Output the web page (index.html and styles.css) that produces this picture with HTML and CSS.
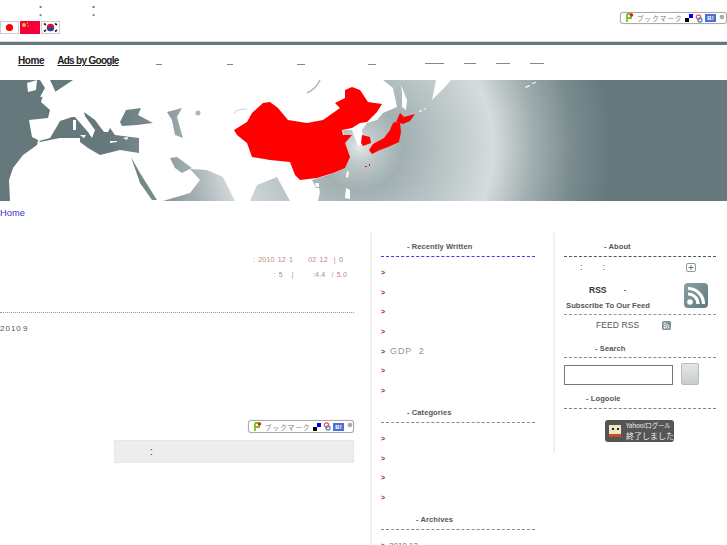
FILE: index.html
```html
<!DOCTYPE html>
<html lang="ja">
<head>
<meta charset="utf-8">
<title>Home</title>
<link rel="stylesheet" href="styles.css">
</head>
<body>
<header class="top">
  <div class="top-left">
    <div class="colons"><span>:</span><span>:</span></div>
    <div class="flags">
      <svg class="flag" viewBox="0 0 19 13"><rect x=".5" y=".5" width="18" height="12" fill="#fff" stroke="#ccc"/><circle cx="9.5" cy="6.5" r="3.6" fill="#f00"/></svg>
      <svg class="flag cn" viewBox="0 0 20 13"><rect width="20" height="13" fill="#f5003a"/><circle cx="4" cy="4" r="2" fill="#f2c230"/><circle cx="7.5" cy="2" r=".7" fill="#f2c230"/><circle cx="8" cy="5" r=".7" fill="#f2c230"/></svg>
      <svg class="flag" viewBox="0 0 19 13"><rect x=".5" y=".5" width="18" height="12" fill="#fff" stroke="#ccc"/><circle cx="9.5" cy="6.5" r="3.7" fill="#d8102f"/><path d="M5.8 6.5a3.7 3.7 0 0 0 7.400 0c-1.500 1-2.500-1-3.700 0s-2.200 1-3.700 0z" fill="#1a4a9c"/><path d="M3 2.500l2 1.500M14 2.500l2 1.500M3 10.500l2-1.500M14 10.500l2-1.500" stroke="#222" stroke-width="1.600"/></svg>
    </div>
  </div>
  <div class="bm bm-top">
    <svg class="bm-p" viewBox="0 0 9 10"><path d="M2 1v8M2 1h4v4H2" fill="none" stroke="#7cc11c" stroke-width="1.800"/><circle cx="6.500" cy="2" r="1.800" fill="#e8232a"/></svg>
    <span class="bm-text">ブックマーク</span>
    <svg class="bm-d" viewBox="0 0 8 8"><rect y="4" width="4" height="4" fill="#000"/><rect x="4" width="4" height="4" fill="#00f"/></svg>
    <svg class="bm-o" viewBox="0 0 8 9"><circle cx="3.500" cy="3" r="2.200" fill="none" stroke="#e55" stroke-width="1.300"/><circle cx="5" cy="6" r="2" fill="none" stroke="#58b" stroke-width="1.300"/></svg>
    <span class="bm-b">B!</span>
    <svg class="bm-g" viewBox="0 0 6 6"><circle cx="3" cy="3" r="2.300" fill="#aaa"/></svg>
  </div>
</header>
<div class="rule"></div>
<nav class="nav">
  <a class="nav-link first">Home</a>
  <a class="nav-link second">Ads by Google</a>
  <span class="dash d1"></span><span class="dash d2"></span><span class="dash d3"></span><span class="dash d4"></span>
  <span class="dash d5"></span><span class="dash d6"></span><span class="dash d7"></span><span class="dash d8"></span>
</nav>
<div class="banner">
  <svg viewBox="0 0 727 121" width="727" height="121">
    <defs>
      <radialGradient id="g" gradientUnits="userSpaceOnUse" cx="360" cy="67" r="252">
        <stop offset="0" stop-color="#e4e8e8"/>
        <stop offset=".07" stop-color="#bcc7c8"/>
        <stop offset=".17" stop-color="#a2b0b2"/>
        <stop offset=".36" stop-color="#bcc7c8"/>
        <stop offset=".53" stop-color="#d6dcdd"/>
        <stop offset=".68" stop-color="#a3b0b2"/>
        <stop offset=".85" stop-color="#788a8d"/>
        <stop offset="1" stop-color="#65797c"/>
      </radialGradient>
    </defs>
    <rect width="727" height="121" fill="url(#g)"/>
    <g fill="#fff">
      <path d="M73 0H383L393 8L397 27L383 33L377 40L367 43L362 50L364 64L358 66L352 50L343 50L345 62L345 80L340 90L328 95L312 100L318 104L320 112L318 121H290L277 97L257 105L250 121H235L223 97L207 90L190 89L200 100L190 113L163 121H10L9 100L13 88L23 75L37 65L38 60L32 57L29 40L48 38L50 30L41 22L43 15L55 12z"/>
      <path d="M40 0H50L57 15L40 17L45 8z"/>
      <path d="M27 3L37 0L36 10L28 12z"/>
      <path d="M436 0H451L444 8L437 15L432 20z"/>
      <path d="M401 5L407 20L406 30L402 27L402 13z"/>
      <path d="M525 7L529 5L530 6L526 8zM532 3L536 2L536 3L532 4z"/>
      <path d="M419 31L421 30L422 31L420 32zM424 29L426 28L426 29L424 30z"/>
      <path d="M347 91L349 92L348 98L346 97z"/>
      <path d="M346 108L350 110L350 119L345 118z"/>
    </g>
    <g fill="url(#g)">
      <path d="M39 61L50 58L56 48L60 41L72 37L75 37L88 52L92 58L95 50L85 36L84 32L95 40L104 52L108 52L110 48L115 55L139 58L139 73L120 70L100 75L88 68L80 62L80 58L60 58L40 62z"/>
      <path d="M120 42L126 30L141 28L138 35L153 43L137 45L122 46z"/>
      <path d="M167 32L182 28L177 37L183 58L175 55L172 40z"/>
      <path d="M131 77L140 93L157 120L152 120L140 103z"/>
      <path d="M170 78L177 77L192 88L182 93L175 88z"/>
      <circle cx="198" cy="33" r="2.500"/>
      <path d="M312 100L320 100L322 108L316 108z"/>
    </g>
    <g fill="#fff">
      <path d="M73 40L76 40L76 50L73 50z"/>
      <path d="M80 55L86 55L84 58z"/>
      <path d="M110 61L117 61L117 62L110 63z"/>
      <path d="M123 58L128 57L127 60z"/>
      <path d="M315 103L319 103L319 107L316 107z"/>
    </g>
    <path d="M320 0Q316 9 307 13" fill="none" stroke="#aab6b8" stroke-width="1.500"/>
    <path d="M234 33Q238 29 247 29" fill="none" stroke="#ccd4d5" stroke-width="1"/>
    <g fill="#f00">
      <path d="M234 50L247 42L252 33L263 23L270 22L278 28L288 40L307 43L323 40L340 28L335 23L345 18L345 10L352 7L360 10L368 22L382 24L377 32L367 42L360 43L352 48L342 50L343 55L352 55L345 63L350 77L345 88L333 93L317 98L300 100L295 95L290 82L270 80L252 77L247 63L237 55z"/>
      <path d="M362 55L370 57L371 63L363 66L361 63z"/>
      <path d="M400 33L404 37L415 34L410 41L403 44L396 42z"/>
      <path d="M394 42L400 43L401 52L399 62L388 67L380 70L372 74L369 70L373 64L384 58L390 50L392 45z"/>
      <rect x="365" y="86" width="2" height="1"/><rect x="369" y="84" width="1" height="2"/>
    </g>
  </svg>
</div>
<a class="crumb">Home</a>
<div class="columns">
  <main class="main">
    <div class="meta">
      <p>: 2010 12 1<span class="gap-a"></span>02 12<span class="gap-b"></span>| <span class="meta-zero">0</span></p>
      <p class="meta-two">: 5<span class="gap-c"></span>|<span class="gap-d"></span>:4.4<span class="gap-e"></span>/ 5.0</p>
    </div>
    <div class="entry">2010 9</div>
    <div class="bm bm-main">
      <svg class="bm-p" viewBox="0 0 9 10"><path d="M2 1v8M2 1h4v4H2" fill="none" stroke="#7cc11c" stroke-width="1.800"/><circle cx="6.500" cy="2" r="1.800" fill="#e8232a"/></svg>
      <span class="bm-text">ブックマーク</span>
      <svg class="bm-d" viewBox="0 0 8 8"><rect y="4" width="4" height="4" fill="#000"/><rect x="4" width="4" height="4" fill="#00f"/></svg>
      <svg class="bm-o" viewBox="0 0 8 9"><circle cx="3.500" cy="3" r="2.200" fill="none" stroke="#e55" stroke-width="1.300"/><circle cx="5" cy="6" r="2" fill="none" stroke="#58b" stroke-width="1.300"/></svg>
      <span class="bm-b">B!</span>
      <svg class="bm-g" viewBox="0 0 6 6"><circle cx="3" cy="3" r="2.300" fill="#aaa"/></svg>
    </div>
    <div class="note">:</div>
  </main>
  <aside class="side-a">
    <h3 class="title t-recent">- Recently Written</h3>
    <ul class="list">
      <li></li><li></li><li></li><li></li><li>GDP &nbsp;2</li><li></li><li></li>
    </ul>
    <h3 class="title t-cat">- Categories</h3>
    <ul class="list">
      <li></li><li></li><li></li><li></li>
    </ul>
    <h3 class="title t-arch">- Archives</h3>
    <ul class="list arch"><li>2010 12</li></ul>
  </aside>
  <aside class="side-b">
    <h3 class="title t-about">- About</h3>
    <div class="about-row">
      <span class="c1">:</span><span class="c2">:</span>
      <svg class="plus" viewBox="0 0 10 9"><rect x=".5" y=".5" width="9" height="8" rx="1.500" fill="#fff" stroke="#8b9a9c"/><path d="M2.500 4.500h5M5 2v5" fill="none" stroke="#65797c"/></svg>
    </div>
    <div class="rss-block">
      <div class="rss-text">
        <div class="rss-head"><b>RSS</b><span>-</span></div>
        <div class="rss-sub">Subscribe To Our Feed</div>
      </div>
      <svg class="rss-big" viewBox="0 0 24 25"><defs><linearGradient id="rg" x1="0" y1="0" x2="1" y2="1"><stop offset="0" stop-color="#8aa0a3"/><stop offset="1" stop-color="#5f7a7e"/></linearGradient></defs><rect width="24" height="25" rx="4" fill="url(#rg)"/><circle cx="6" cy="19" r="2.800" fill="#fff"/><path d="M4 11a10 10 0 0 1 10 10M4 5.500a15.500 15.500 0 0 1 15.500 15.500" fill="none" stroke="#fff" stroke-width="3.200"/></svg>
    </div>
    <div class="feed"><span>FEED RSS</span>
      <svg class="rss-small" viewBox="0 0 9 9"><rect width="9" height="9" rx="1.500" fill="#7d9496"/><circle cx="2.500" cy="6.700" r="1" fill="#fff"/><path d="M1.500 4a3.500 3.500 0 0 1 3.500 3.500M1.500 2a5.500 5.500 0 0 1 5.500 5.500" fill="none" stroke="#fff"/></svg>
    </div>
    <h3 class="title t-search">- Search</h3>
    <form class="search">
      <input class="search-input" type="text" aria-label="Search">
      <button class="search-btn" type="button" aria-label="Search"></button>
    </form>
    <h3 class="title t-logo">- Logoole</h3>
    <div class="yahoo">
      <svg class="yahoo-ic" viewBox="0 0 18 18"><rect x="2" y="3" width="12" height="9" fill="#efe6c8"/><rect x="2" y="12" width="12" height="3" fill="#c8501e"/><rect x="5" y="6" width="2" height="2" fill="#222"/><rect x="10" y="6" width="2" height="2" fill="#222"/></svg>
      <div class="yahoo-txt"><span class="y1">Yahoo!ログール</span><span class="y2">終了しました</span></div>
    </div>
  </aside>
</div>
</body>
</html>
```
FILE: styles.css
```css
html, body { margin: 0; padding: 0; height: 545px; overflow: hidden; background: #fff; }
body { font-family: "Liberation Sans", Arial, sans-serif; font-size: 9px; color: #555; }
p, h3, ul { margin: 0; padding: 0; }

.top { height: 41px; display: flex; justify-content: space-between; align-items: flex-start; }
.top-left { display: flex; flex-direction: column; }
.colons { height: 21px; display: flex; color: #65797c; font-size: 18px; line-height: 21px; padding-left: 38px; gap: 48px; }
.flags { display: flex; gap: 1px; }
.flag { width: 19px; height: 13px; display: block; }
.flag.cn { width: 20px; }

.bm { width: 107px; height: 12px; box-sizing: border-box; border: 1px solid #aaa; border-radius: 3px; background: #fff; display: flex; align-items: center; padding-left: 4px; box-shadow: 0 0 1px #bbb; }
.bm-top { margin-top: 12px; }
.bm-p { width: 9px; height: 10px; flex: none; }
.bm-text { font-family: "Noto Sans CJK JP", sans-serif; font-size: 6.500px; line-height: 10px; color: #777; letter-spacing: 1.100px; margin-left: 3px; width: 46px; white-space: nowrap; }
.bm-d { width: 8px; height: 8px; margin-left: 2px; flex: none; }
.bm-o { width: 8px; height: 9px; margin-left: 2px; flex: none; }
.bm-b { width: 11px; height: 8px; margin-left: 2px; background: #4d6fd6; color: #fff; font-size: 6px; font-weight: bold; line-height: 8px; text-align: center; flex: none; }
.bm-g { width: 6px; height: 6px; margin-left: 3px; align-self: flex-start; margin-top: 1px; flex: none; }

.rule { height: 3px; border-top: 1px solid #d8dcdc; background: #65797c; }

.nav { height: 35px; display: flex; align-items: flex-start; padding-left: 18px; box-sizing: border-box; }
.nav-link { font-size: 10px; font-weight: bold; color: #222; text-decoration: underline; line-height: 13px; margin-top: 9px; letter-spacing: -.4px; }
.nav-link.second { margin-left: 13px; letter-spacing: -.7px; }
.dash { height: 1px; background: #7a8a8c; margin-top: 19px; }
.d1 { width: 6px; margin-left: 37px; }
.d2 { width: 6px; margin-left: 65px; }
.d3 { width: 8px; margin-left: 64px; }
.d4 { width: 8px; margin-left: 63px; }
.d5 { width: 19px; margin-left: 49px; margin-top: 18px; }
.d6 { width: 12px; margin-left: 20px; margin-top: 18px; }
.d7 { width: 14px; margin-left: 20px; margin-top: 18px; }
.d8 { width: 14px; margin-left: 20px; margin-top: 18px; }

.banner { height: 121px; }
.banner svg { display: block; }

.crumb { display: block; height: 32px; font-size: 9.300px; line-height: 24px; color: #3333cc; }

.columns { display: grid; grid-template-columns: 370px 183px 174px; height: 312px; }

.main { width: 354px; color: #555; }
.meta { height: 80px; box-sizing: border-box; border-bottom: 1px dotted #8b9a9c; font-size: 7px; letter-spacing: .2px; word-spacing: 1px; color: #b8897a; text-align: right; padding-top: 19px; padding-right: 11px; white-space: nowrap; }
.meta p { line-height: 15px; }
.meta-zero { color: #7d9496; }
.meta-two { margin-right: -4px; }
.gap-a, .gap-b, .gap-c, .gap-d, .gap-e { display: inline-block; }
.gap-a { width: 15px; }
.gap-b { width: 6px; }
.gap-c { width: 9px; }
.gap-d { width: 19px; }
.gap-e { width: 6px; }
.entry { height: 107px; box-sizing: border-box; padding-top: 10px; font-size: 8px; line-height: 11px; letter-spacing: 1px; word-spacing: -2px; }
.bm-main { margin-left: 248px; width: 106px; height: 13px; }
.note { margin: 7px 0 0 114px; height: 23px; box-sizing: border-box; width: 240px; background: #ededed; border: 1px solid #e6e6e6; padding-left: 35px; font-size: 10px; line-height: 21px; color: #333; }

.side-a { border-left: 2px solid #f0f0f0; box-sizing: border-box; padding: 8px 18px 0 9px; }
.side-b { box-sizing: border-box; padding: 8px 11px 0 11px; position: relative; }
.side-b::before { content: ""; position: absolute; left: 0; top: 0; width: 2px; height: 220px; background: #f0f0f0; }

.title { font-size: 7.500px; font-weight: bold; color: #555; line-height: 11px; height: 15px; border-bottom: 1px dashed #7d8d8f; letter-spacing: .1px; }
.t-recent { padding-left: 26px; border-bottom-color: #3c3cee; }
.t-cat { padding-left: 26px; margin-top: 6px; }
.t-arch { padding-left: 35px; margin-top: 6px; }
.t-about { padding-left: 40px; border-bottom-color: #555; }
.t-search { padding-left: 31px; margin-top: 8px; height: 14px; }
.t-logo { padding-left: 22px; margin-top: 8px; border-bottom-color: #6b8c92; }

.list { list-style: none; margin-top: 6px; }
.list li { height: 19.700px; line-height: 19.700px; padding-left: 9px; font-size: 9px; letter-spacing: .9px; color: #8b9a9c; position: relative; }
.list li::before { content: ">"; position: absolute; left: 0; top: 0; color: #8c1c2c; font-weight: bold; font-size: 7px; line-height: 20px; }
.arch { margin-top: 6px; }
.arch li { padding-left: 8px; color: #777; font-size: 8px; letter-spacing: 0; }

.about-row { height: 20px; position: relative; display: flex; align-items: center; }
.c1 { margin-left: 16px; }
.c2 { margin-left: 20px; }
.plus { width: 10px; height: 9px; margin-left: auto; margin-right: 20px; }

.rss-block { height: 38px; box-sizing: border-box; border-bottom: 1px dashed #8b9a9c; display: flex; justify-content: space-between; }
.rss-text { padding-left: 2px; padding-top: 7px; }
.rss-head { display: flex; height: 16px; padding-left: 23px; gap: 17px; line-height: 13px; font-size: 8.500px; color: #333; }
.rss-sub { font-size: 7.700px; font-weight: bold; line-height: 12px; color: #555; white-space: nowrap; }
.rss-big { width: 24px; height: 25px; margin-right: 8px; margin-top: 6px; }
.feed { height: 20px; display: flex; align-items: center; padding-left: 32px; font-size: 8.500px; letter-spacing: .1px; color: #555; }
.rss-small { width: 9px; height: 9px; margin-left: 23px; }

.search { display: flex; align-items: flex-start; margin-top: 5px; gap: 8px; }
.search-input { width: 109px; height: 20px; box-sizing: border-box; border: 1px solid #777; background: #fff; padding: 0; margin: 2px 0 0 0; }
.search-btn { width: 18px; height: 22px; border: 1px solid #bbb; border-radius: 2px; background: linear-gradient(#e4e6e6, #c9cdcd); padding: 0; }

.yahoo { width: 69px; height: 22px; margin: 11px 0 0 41px; background: #555; border-radius: 3px; display: flex; align-items: center; padding-left: 2px; box-sizing: border-box; }
.yahoo-ic { width: 18px; height: 18px; flex: none; }
.yahoo-txt { display: flex; flex-direction: column; color: #eee; font-family: "Noto Sans CJK JP", sans-serif; white-space: nowrap; margin-left: 1px; }
.y1 { font-size: 6.500px; line-height: 9px; letter-spacing: -.2px; }
.y2 { font-size: 8px; line-height: 11px; }
```
